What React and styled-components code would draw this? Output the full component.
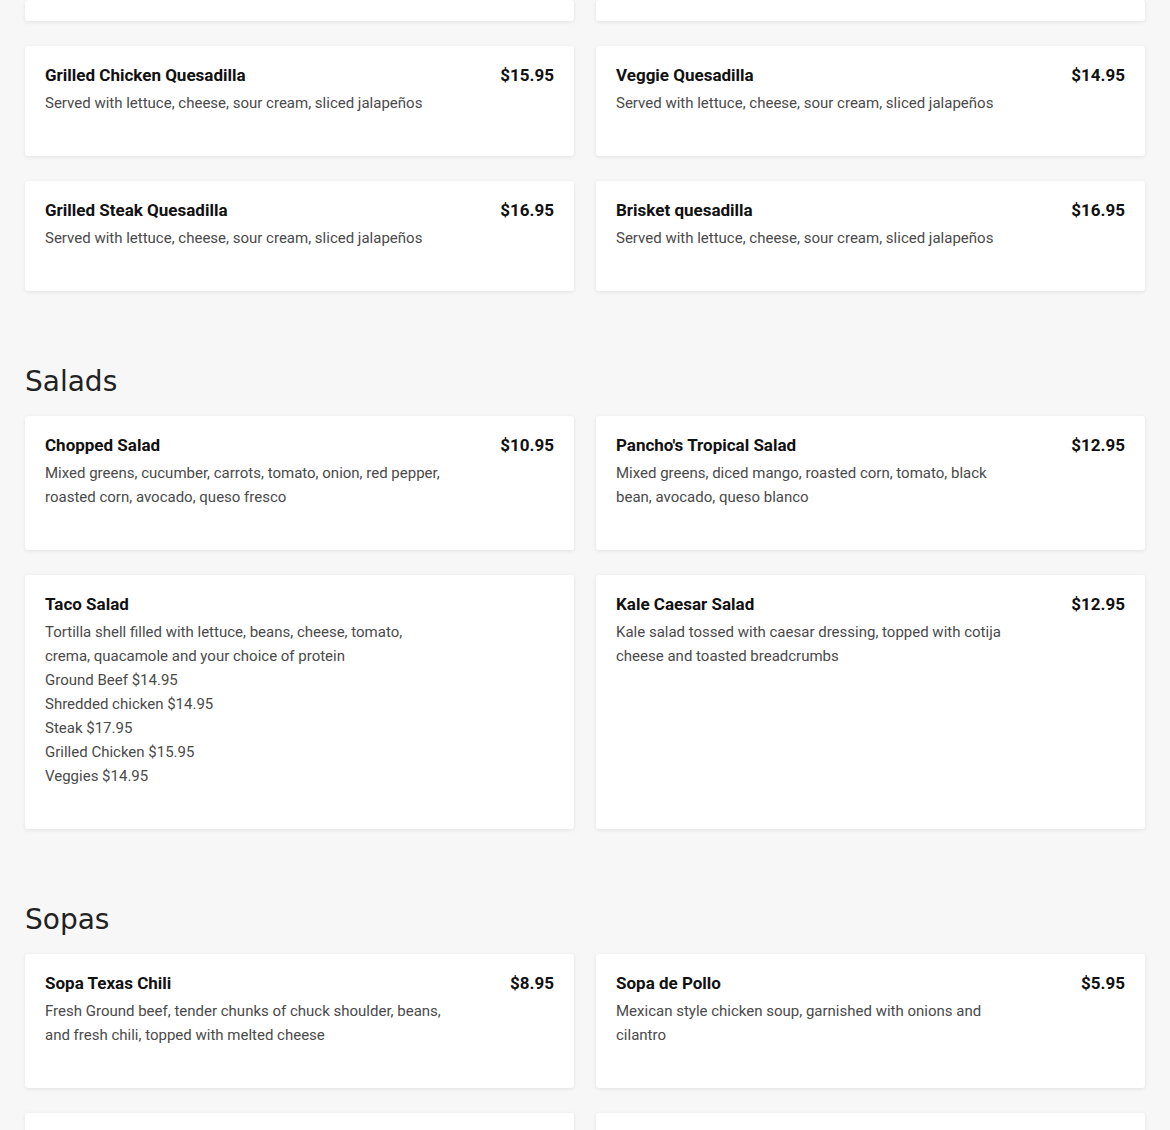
import React from 'react'
import styled, { createGlobalStyle } from 'styled-components'

const GlobalStyle = createGlobalStyle`
  html, body {
    margin: 0;
    padding: 0;
    background: #f7f7f7;
    overflow: hidden;
  }
  body {
    font-family: Roboto, "Liberation Sans", Arial, sans-serif;
  }
`

const Page = styled.div`
  height: 100vh;
  overflow: hidden;
  padding: 0 25px;
  box-sizing: border-box;
`

const Section = styled.section`
  margin-top: ${(p) => (p.$first ? '0' : '74px')};
`

const Heading = styled.h2`
  margin: 0 0 17px;
  font-family: "DejaVu Sans", "Open Sans", sans-serif;
  font-weight: 400;
  font-size: 28px;
  line-height: 34px;
  color: #222;
`

const Grid = styled.div`
  display: grid;
  grid-template-columns: 1fr 1fr;
  column-gap: 22px;
  row-gap: 25px;
`

const Card = styled.div`
  background: #fff;
  border-radius: 3px;
  box-shadow: 0 1px 4px rgba(0, 0, 0, 0.09);
  padding: ${(p) => (p.$stub ? '0' : '20px')};
  height: ${(p) => (p.$stub ? `${p.$stub}px` : 'auto')};
  min-height: ${(p) => (p.$tall ? '110px' : '0')};
  box-sizing: border-box;
`

const TitleRow = styled.div`
  display: flex;
  justify-content: space-between;
  align-items: baseline;
  gap: 20px;
`

const Title = styled.h3`
  margin: 0;
  font-size: 17px;
  line-height: 18px;
  font-weight: 700;
  color: #111;
`

const Price = styled.span`
  font-size: 17px;
  line-height: 18px;
  font-weight: 700;
  color: #111;
`

const Description = styled.div`
  margin: 7px 0 21px;
  max-width: 402px;
  font-size: 15px;
  line-height: 24px;
  color: #4a4a4a;
`

const Line = styled.div``

const quesadillas = [
  { name: 'Grilled Chicken Quesadilla', price: '$15.95', desc: 'Served with lettuce, cheese, sour cream, sliced jalapeños' },
  { name: 'Veggie Quesadilla', price: '$14.95', desc: 'Served with lettuce, cheese, sour cream, sliced jalapeños' },
  { name: 'Grilled Steak Quesadilla', price: '$16.95', desc: 'Served with lettuce, cheese, sour cream, sliced jalapeños' },
  { name: 'Brisket quesadilla', price: '$16.95', desc: 'Served with lettuce, cheese, sour cream, sliced jalapeños' },
]

const salads = [
  { name: 'Chopped Salad', price: '$10.95', desc: 'Mixed greens, cucumber, carrots, tomato, onion, red pepper, roasted corn, avocado, queso fresco' },
  { name: "Pancho's Tropical Salad", price: '$12.95', desc: 'Mixed greens, diced mango, roasted corn, tomato, black bean, avocado, queso blanco' },
  {
    name: 'Taco Salad',
    desc: 'Tortilla shell filled with lettuce, beans, cheese, tomato, crema, quacamole and your choice of protein',
    extras: ['Ground Beef $14.95', 'Shredded chicken $14.95', 'Steak $17.95', 'Grilled Chicken $15.95', 'Veggies $14.95'],
  },
  { name: 'Kale Caesar Salad', price: '$12.95', desc: 'Kale salad tossed with caesar dressing, topped with cotija cheese and toasted breadcrumbs' },
]

const sopas = [
  { name: 'Sopa Texas Chili', price: '$8.95', desc: 'Fresh Ground beef, tender chunks of chuck shoulder, beans, and fresh chili, topped with melted cheese' },
  { name: 'Sopa de Pollo', price: '$5.95', desc: 'Mexican style chicken soup, garnished with onions and cilantro' },
]

const MenuItem = ({ item }) => (
  <Card>
    <TitleRow>
      <Title>{item.name}</Title>
      {item.price && <Price>{item.price}</Price>}
    </TitleRow>
    <Description>
      <Line>{item.desc}</Line>
      {item.extras && item.extras.map((e) => <Line key={e}>{e}</Line>)}
    </Description>
  </Card>
)

const App = () => {
  return (
    <Page>
      <GlobalStyle />

      <Section $first>
        <Grid>
          <Card $stub={21} />
          <Card $stub={21} />
          {quesadillas.map((item) => (
            <MenuItem key={item.name} item={item} />
          ))}
        </Grid>
      </Section>

      <Section>
        <Heading>Salads</Heading>
        <Grid>
          {salads.map((item) => (
            <MenuItem key={item.name} item={item} />
          ))}
        </Grid>
      </Section>

      <Section>
        <Heading>Sopas</Heading>
        <Grid>
          {sopas.map((item) => (
            <MenuItem key={item.name} item={item} />
          ))}
          <Card $tall />
          <Card $tall />
        </Grid>
      </Section>
    </Page>
  )
}

export default App
